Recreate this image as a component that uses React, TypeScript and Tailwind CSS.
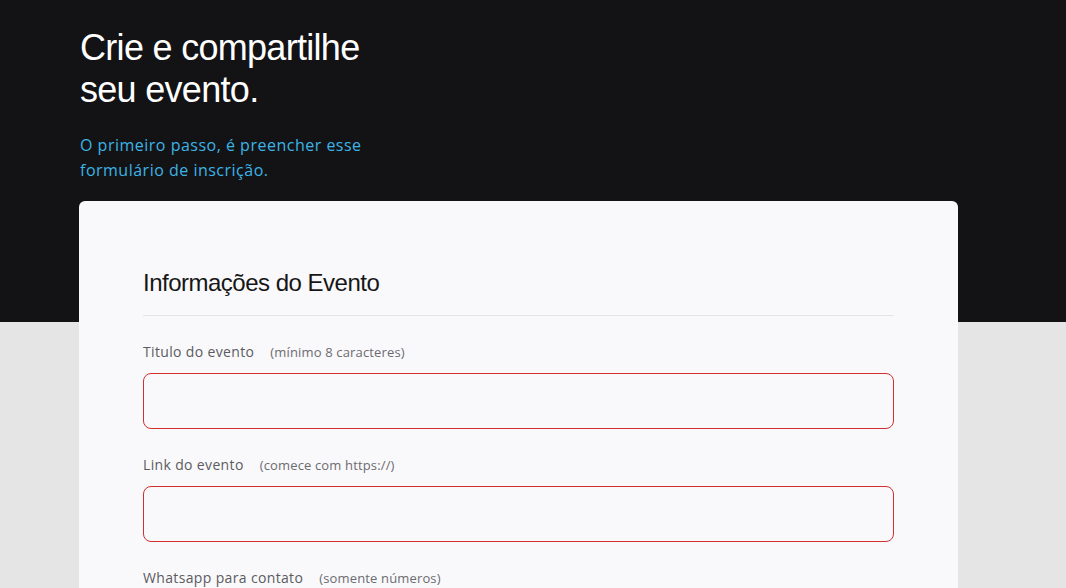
const fields = [
  { label: 'Titulo do evento', hint: '(mínimo 8 caracteres)' },
  { label: 'Link do evento', hint: '(comece com https://)' },
  { label: 'Whatsapp para contato', hint: '(somente números)' },
];

export default function App() {
  return (
    <div className="min-h-screen bg-[#e5e5e5] font-['Open_Sans',sans-serif]">
      <div className="absolute inset-x-0 top-0 h-[322px] bg-[#131315]" />
      <div className="relative pl-[79px] pt-[27px]">
        <h1 className="pl-[1px] font-['Liberation_Sans',Arial,sans-serif] text-[36px] leading-[42px] tracking-[-0.7px] text-white">
          Crie e compartilhe
          <br />
          seu evento.
        </h1>
        <p className="mt-[22px] pl-[1px] text-[16px] leading-[25px] tracking-[0.5px] text-[#3cb4e6]">
          O primeiro passo, é preencher esse
          <br />
          formulário de inscrição.
        </p>

        <div className="mt-[18px] w-[879px] rounded-[6px] bg-[#f9f9fb] px-16 pt-[65px] pb-10">
          <h2 className="font-['Liberation_Sans',Arial,sans-serif] text-[24px] leading-[34px] tracking-[-0.5px] text-[#161616]">
            Informações do Evento
          </h2>
          <div className="mt-[15px] h-px bg-[#e4e4e7]" />

          <div className="mt-[26px] flex flex-col gap-[26px]">
            {fields.map((f) => (
              <div key={f.label}>
                <div className="flex items-baseline gap-4 text-[#5b5b60]">
                  <span className="text-[14px] leading-[20px] tracking-[0.35px]">{f.label}</span>
                  <span className="text-[13px] leading-[20px] tracking-[0.15px] text-[#6b6b70]">{f.hint}</span>
                </div>
                <input
                  type="text"
                  className="mt-[11px] block h-[56px] w-full rounded-[8px] border border-[#d32f2f] bg-transparent px-4 outline-none"
                />
              </div>
            ))}
          </div>
        </div>
      </div>
    </div>
  );
}
